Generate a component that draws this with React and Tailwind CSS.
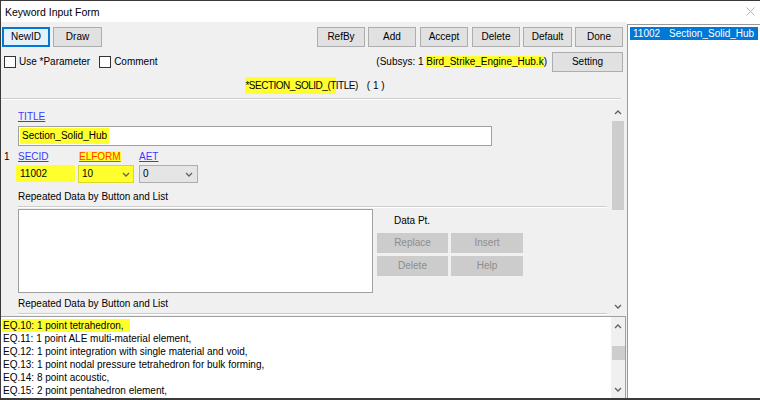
import React from 'react';

const eqLines = [
  'EQ.10: 1 point tetrahedron,',
  'EQ.11: 1 point ALE multi-material element,',
  'EQ.12: 1 point integration with single material and void,',
  'EQ.13: 1 point nodal pressure tetrahedron for bulk forming,',
  'EQ.14: 8 point acoustic,',
  'EQ.15: 2 point pentahedron element,',
  'EQ.16: 5 point 10-noded tetrahedron,',
];

function Btn({ className = '', focused, disabled, children }) {
  return (
    <div
      className={`h-[20px] flex items-center justify-center shrink-0 ${
        focused
          ? 'border-2 border-[#0078d7] bg-[#e5f1fb]'
          : disabled
          ? 'border border-[#cccccc] bg-[#cccccc] text-[#8d8d8d]'
          : 'border border-[#adadad] bg-[#e1e1e1]'
      } ${className}`}
    >
      {children}
    </div>
  );
}

function Chevron({ up }) {
  return (
    <svg width="8" height="5" viewBox="0 0 8 5" className="block">
      <polyline
        points={up ? '1,4 4,1 7,4' : '1,1 4,4 7,1'}
        fill="none"
        stroke="#606060"
        strokeWidth="1.3"
      />
    </svg>
  );
}

function Checkbox({ label, className = '' }) {
  return (
    <div className={`flex items-center ${className}`}>
      <div className="w-[12px] h-[12px] border border-[#333333] bg-white" />
      <span className="ml-[3px]">{label}</span>
    </div>
  );
}

export default function App() {
  return (
    <div className="w-[760px] h-[400px] overflow-hidden bg-white border-l border-t border-b-2 border-[#3a3a3a] flex flex-col text-[10px] leading-[12px] text-black font-['Liberation_Sans',Arial,sans-serif]">
      {/* title bar */}
      <div className="h-[21px] shrink-0 flex items-center justify-between pl-[4px] pr-[5px]">
        <span className="text-[10.5px]">Keyword Input Form</span>
        <svg width="9" height="9" viewBox="0 0 9 9">
          <path d="M0.5 0.5 L8.5 8.5 M8.5 0.5 L0.5 8.5" stroke="#b5b5b5" strokeWidth="1" />
        </svg>
      </div>

      <div className="flex flex-1 min-h-0">
        {/* main form */}
        <div className="w-[626px] bg-[#f0f0f0] flex flex-col">
          {/* toolbar */}
          <div className="flex pt-[5px] pr-[4px]">
            <Btn focused className="ml-[1px] w-[48px]">NewID</Btn>
            <Btn className="ml-[3px] w-[49px]">Draw</Btn>
            <div className="ml-auto flex">
              <Btn className="w-[48px]">RefBy</Btn>
              <Btn className="ml-[3px] w-[48px]">Add</Btn>
              <Btn className="ml-[4px] w-[48px]">Accept</Btn>
              <Btn className="ml-[4px] w-[48px]">Delete</Btn>
              <Btn className="ml-[3px] w-[49px]">Default</Btn>
              <Btn className="ml-[3px] w-[48px]">Done</Btn>
            </div>
          </div>

          {/* options row */}
          <div className="flex items-center mt-[5px] h-[20px] pr-[4px]">
            <Checkbox label="Use *Parameter" className="ml-[3px]" />
            <Checkbox label="Comment" className="ml-[9px]" />
            <span className="ml-auto">
              (Subsys: 1 <span className="bg-[#ffff2e]">Bird_Strike_Engine_Hub.k</span>)
            </span>
            <Btn className="ml-[5px] w-[71px]">Setting</Btn>
          </div>

          {/* keyword name */}
          <div className="h-[26px] pt-[2px] flex items-center justify-center pl-[2px]">
            <span className="tracking-[-0.5px]">
              <span className="bg-[#ffff2e] py-[3px]">*SECTION_SOLID_(T</span>ITLE)
            </span>
            <span className="ml-[9px]">( 1 )</span>
          </div>

          <div className="h-[2px] mr-[6px] border-t border-[#cdcdcd] border-b border-b-white" />

          {/* scroll panel */}
          <div className="flex h-[216px] shrink-0">
            <div className="flex-1 flex flex-col pl-[3px]">
              <span className="ml-[14px] mt-[11px] text-[#3a3aff] underline">TITLE</span>
              <div className="ml-[14px] mt-[3px] w-[474px] h-[20px] bg-white border border-[#a0a0a0] flex items-center pl-[1px]">
                <span className="bg-[#ffff2e] px-[2px] py-[2px]">Section_Solid_Hub</span>
              </div>

              <div className="flex mt-[5px] h-[12px]">
                <span className="w-[14px]">1</span>
                <span className="w-[61px] text-[#3a3aff] underline">SECID</span>
                <span className="w-[60px]">
                  <span className="bg-[#ffff2e] text-[#ff3c00] underline">ELFORM</span>
                </span>
                <span className="text-[#3a3aff] underline">AET</span>
              </div>

              <div className="flex mt-[2px] ml-[12px] h-[18px]">
                <div className="w-[60px] h-[17px] bg-[#ffff2e] border-r border-white flex items-center pl-[4px]">
                  11002
                </div>
                <div className="ml-[2px] w-[56px] h-[18px] bg-[#ffff2e] border border-[#d8d82a] flex items-center justify-between pl-[3px] pr-[3px]">
                  <span>10</span>
                  <Chevron />
                </div>
                <div className="ml-[5px] w-[59px] h-[18px] bg-[#e5e5e5] border border-[#adadad] flex items-center justify-between pl-[3px] pr-[4px]">
                  <span>0</span>
                  <Chevron />
                </div>
              </div>

              <span className="ml-[14px] mt-[8px]">Repeated Data by Button and List</span>
              <div className="ml-[14px] mr-[4px] mt-[3px] h-[2px] border-t border-[#cdcdcd] border-b border-b-white" />

              <div className="flex ml-[14px] mt-[1px]">
                <div className="w-[355px] h-[84px] bg-white border border-[#a0a0a0]" />
                <div className="ml-[4px] flex flex-col">
                  <span className="mt-[6px] pl-[17px] h-[12px]">Data Pt.</span>
                  <div className="flex mt-[6px]">
                    <Btn disabled className="w-[71px]">Replace</Btn>
                    <Btn disabled className="ml-[3px] w-[72px]">Insert</Btn>
                  </div>
                  <div className="flex mt-[3px]">
                    <Btn disabled className="w-[71px]">Delete</Btn>
                    <Btn disabled className="ml-[3px] w-[72px]">Help</Btn>
                  </div>
                </div>
              </div>

              <span className="ml-[14px] mt-[5px]">Repeated Data by Button and List</span>
              <div className="ml-[14px] mr-[4px] mt-[3px] h-[2px] border-t border-[#cdcdcd] border-b border-b-white" />
            </div>

            {/* panel scrollbar */}
            <div className="w-[13px] mr-[3px] mt-[4px] flex flex-col items-center">
              <div className="h-[17px] flex items-center justify-center">
                <Chevron up />
              </div>
              <div className="w-[12px] h-[89px] bg-[#cdcdcd]" />
              <div className="flex-1" />
              <div className="h-[16px] mb-[2px] flex items-center justify-center">
                <Chevron />
              </div>
            </div>
          </div>

          {/* description box */}
          <div className="flex-1 min-h-0 mr-[1px] bg-white border-t border-r border-[#a0a0a0] flex">
            <div className="flex-1 overflow-hidden pt-[2px] pl-[1px] leading-[13px]">
              {eqLines.map((l, i) => (
                <div key={i} className="h-[13px] whitespace-nowrap">
                  <span className={i === 0 ? 'bg-[#ffff2e] pl-[1px] pr-[6px] py-[1px]' : 'pl-[1px]'}>{l}</span>
                </div>
              ))}
            </div>
            <div className="w-[14px] bg-[#f0f0f0] flex flex-col items-center">
              <div className="h-[17px] mt-[1px] flex items-center justify-center">
                <Chevron up />
              </div>
              <div className="mt-[11px] w-[13px] h-[14px] bg-[#cdcdcd]" />
              <div className="flex-1" />
              <div className="h-[17px] flex items-center justify-center">
                <Chevron />
              </div>
            </div>
          </div>
        </div>

        {/* id list */}
        <div className="flex-1 bg-white">
          <div className="h-full mt-[2px] border-l border-t border-[#9a9a9a] pt-[2px] pl-[2px] pr-[2px]">
            <div className="h-[13px] bg-[#0078d7] text-white flex items-center pl-[3px] whitespace-nowrap">
              11002<span className="ml-[9px]">Section_Solid_Hub</span>
            </div>
          </div>
        </div>
      </div>
    </div>
  );
}
